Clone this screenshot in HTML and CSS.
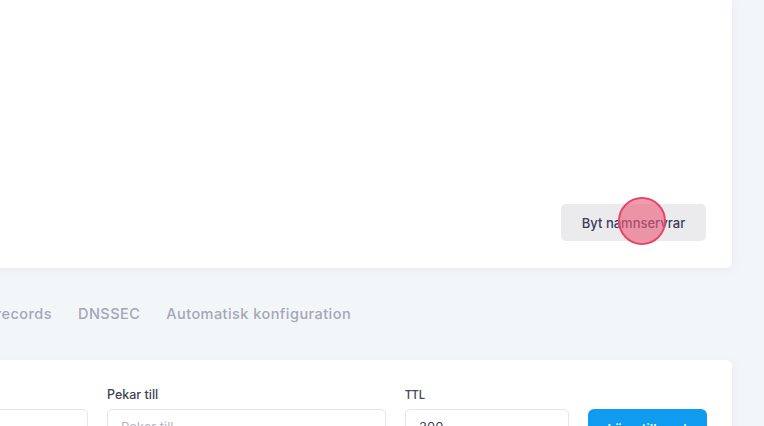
FILE: index.html
```html
<!DOCTYPE html>
<html lang="sv">
<head>
<meta charset="utf-8">
<link rel="stylesheet" href="styles.css">
</head>
<body>
<div class="page">
  <section class="card card-top">
    <div class="card-actions">
      <button class="btn btn-light">Byt namnservrar</button>
    </div>
  </section>

  <nav class="tabs">
    <span class="tab tab-first"><span>DNS-records</span></span>
    <span class="tab">DNSSEC</span>
    <span class="tab">Automatisk konfiguration</span>
  </nav>

  <section class="card card-form">
    <div class="form-row">
      <div class="field">
        <label class="label">Namn</label>
        <div class="input"><span class="placeholder">Namn</span></div>
      </div>
      <div class="field">
        <label class="label">Pekar till</label>
        <div class="input"><span class="placeholder">Pekar till</span></div>
      </div>
      <div class="field">
        <label class="label label-alt">TTL</label>
        <div class="input"><span class="value">300</span></div>
      </div>
      <div class="field field-btn">
        <button class="btn btn-primary">Lägg till post</button>
      </div>
    </div>
  </section>
</div>
<div class="click-marker"></div>
</body>
</html>
```

FILE: styles.css
```css
* { box-sizing: border-box; }
html, body { margin: 0; padding: 0; }
body {
  background: #f3f6f9;
  font-family: "Inter", "Open Sans", sans-serif;
  width: 764px;
  height: 426px;
  overflow: hidden;
  position: relative;
}
.page {
  margin-left: -200px;
  width: 932px;
}
.card {
  background: #ffffff;
  border-radius: 0 0 6px 6px;
  box-shadow: 0 2px 10px rgba(82, 63, 105, 0.07);
}
.card-top {
  height: 268px;
  display: flex;
  flex-direction: column;
  justify-content: flex-end;
  padding: 0 26px 27px 30px;
}
.card-actions {
  display: flex;
  justify-content: flex-end;
}
.btn {
  font-family: inherit;
  border: none;
  border-radius: 5px;
  font-size: 13px;
  font-weight: 500;
  cursor: pointer;
}
.btn-light {
  width: 145px;
  height: 37px;
  background: #ebebed;
  color: #3b3b58;
}
.tabs {
  display: flex;
  align-items: center;
  gap: 26px;
  height: 92px;
  padding-left: 200px;
  padding-bottom: 2px;
}
.tab {
  font-size: 14.5px;
  font-weight: 500;
  color: #a4a6b8;
  white-space: nowrap;
  letter-spacing: 0.45px;
}
.tab-first {
  width: 52px;
  display: flex;
  justify-content: flex-end;
}
.card-form {
  border-radius: 6px 6px 0 0;
  height: 120px;
  padding: 27px 26px 0 30px;
}
.form-row {
  display: grid;
  grid-template-columns: 258px 279px 164px 119px;
  column-gap: 19px;
}
.field {
  display: flex;
  flex-direction: column;
}
.label {
  font-size: 12.5px;
  font-weight: 500;
  color: #3f4254;
  height: 22px;
  line-height: 16px;
}
.label-alt {
  font-family: "Open Sans", sans-serif;
  font-size: 12px;
  font-weight: 600;
  color: #4a4d5e;
}
.input {
  height: 40px;
  border: 1px solid #e4e6ef;
  border-radius: 5px;
  padding: 9px 13px;
  font-size: 13px;
}
.placeholder { color: #b5b5c3; }
.value { color: #3f4254; }
.field-btn { justify-content: flex-end; }
.btn-primary {
  height: 40px;
  margin-top: -1px;
  background: #0f9cf0;
  color: #ffffff;
  font-weight: 600;
  border-radius: 6px;
}
.click-marker {
  position: absolute;
  left: 618px;
  top: 197px;
  width: 48px;
  height: 48px;
  border-radius: 50%;
  background: rgba(236, 90, 120, 0.6);
  border: 2px solid #e5476a;
}
```
